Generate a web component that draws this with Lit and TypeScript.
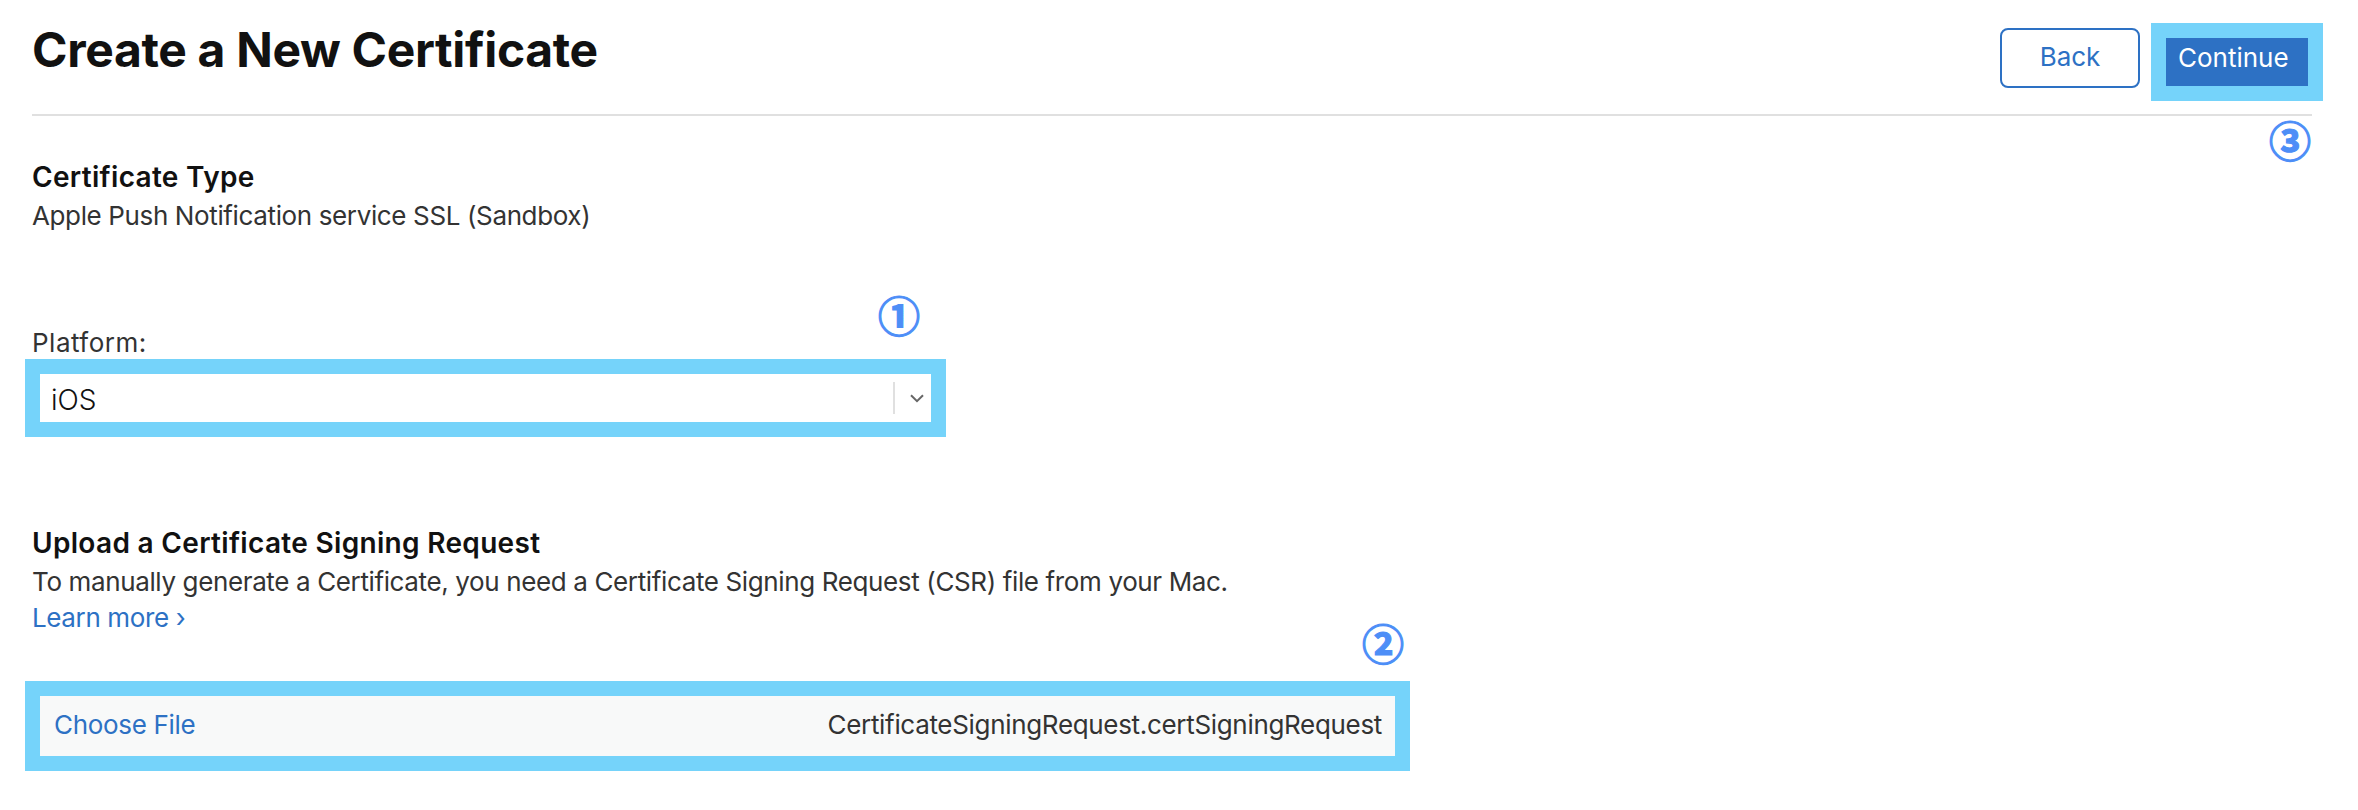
import { LitElement, html, css } from "lit";
import { customElement } from "lit/decorators.js";

@customElement("app-root")
export class AppRoot extends LitElement {
  static styles = css`
    :host { display: block; width: 2358px; height: 810px; background: #fff; font-family: Inter, "Noto Sans", sans-serif; color: #333; overflow: hidden; }
    .page { padding: 0 46px 0 32px; }
    .header { display: flex; justify-content: space-between; height: 114px; border-bottom: 2px solid #e0e0e0; }
    h1 { margin: 20px 0 0; font-size: 48px; line-height: 60px; font-weight: 700; color: #111; letter-spacing: -0.33px; }
    .actions { display: flex; align-items: flex-start; margin-right: -11px; padding-top: 23px; gap: 11px; position: relative; }
    .btn { box-sizing: border-box; font-size: 26px; line-height: 40px; height: 48px; }
    .back { margin-top: 5px; width: 140px; height: 60px; line-height: 53px; border: 2px solid #2d71c4; border-radius: 8px; color: #2d71c4; text-align: center; }
    .hl { border: 15px solid #75d3fa; }
    .continue { width: 142px; background: #2d71c4; color: #fff; padding-left: 12px; box-sizing: border-box; }
    .num { position: absolute; font-family: "Noto Sans CJK JP", sans-serif; font-weight: 700; font-size: 42px; line-height: 42px; width: 42px; text-align: center; color: #4d8ef7; -webkit-text-stroke: 1.2px #4d8ef7; }
    .n1 { left: 838px; top: -81px; }
    .n2 { left: 1322px; top: -75px; }
    .n3 { right: 12px; top: 118px; }
    h2 { margin: 0; font-size: 28px; line-height: 36px; font-weight: 600; color: #111; letter-spacing: 0.32px; }
    p { margin: 0; font-size: 26px; line-height: 36px; letter-spacing: -0.37px; }
    h2 + p { margin-top: 3px; }
    .type { margin-top: 43px; }
    .label { margin-top: 91px; font-size: 26px; line-height: 36px; letter-spacing: 0.5px; }
    .select-wrap { position: relative; margin: -2px 0 0 -7px; width: 921px; box-sizing: border-box; }
    .select { display: flex; align-items: center; height: 48px; background: #fff; padding-left: 11px; }
    .value { flex: 1; font-size: 28px; font-weight: 300; color: #111; padding-top: 3px; }
    .sep { width: 2px; height: 32px; background: #e0e0e0; }
    .chev { width: 36px; padding-left: 8px; box-sizing: border-box; display: flex; justify-content: center; }
    .upload { margin-top: 88px; }
    a { color: #2d71c4; text-decoration: none; }
    .file-wrap { position: relative; margin: 45px 0 0 -7px; width: 1385px; box-sizing: border-box; }
    .file { display: flex; justify-content: space-between; align-items: center; box-sizing: border-box; height: 60px; background: #f8f9f9; padding: 0 13px 3px 14px; font-size: 26px; letter-spacing: -0.32px; }
  `;

  render() {
    return html`
      <div class="page">
        <div class="header">
          <h1>Create a New Certificate</h1>
          <div class="actions">
            <div class="btn back">Back</div>
            <div class="hl"><div class="btn continue">Continue</div></div>
            <span class="num n3">③</span>
          </div>
        </div>
        <div class="type">
          <h2>Certificate Type</h2>
          <p>Apple Push Notification service SSL (Sandbox)</p>
        </div>
        <div class="label">Platform:</div>
        <div class="select-wrap hl">
          <span class="num n1">①</span>
          <div class="select">
            <span class="value">iOS</span>
            <span class="sep"></span>
            <span class="chev">
              <svg width="14" height="9" viewBox="0 0 14 9"><path d="M1 1.2 7 7.2 13 1.2" fill="none" stroke="#666" stroke-width="2"/></svg>
            </span>
          </div>
        </div>
        <div class="upload">
          <h2>Upload a Certificate Signing Request</h2>
          <p>To manually generate a Certificate, you need a Certificate Signing Request (CSR) file from your Mac.</p>
          <p><a href="#">Learn more ›</a></p>
        </div>
        <div class="file-wrap hl">
          <span class="num n2">②</span>
          <div class="file">
            <a href="#">Choose File</a>
            <span>CertificateSigningRequest.certSigningRequest</span>
          </div>
        </div>
      </div>
    `;
  }
}
